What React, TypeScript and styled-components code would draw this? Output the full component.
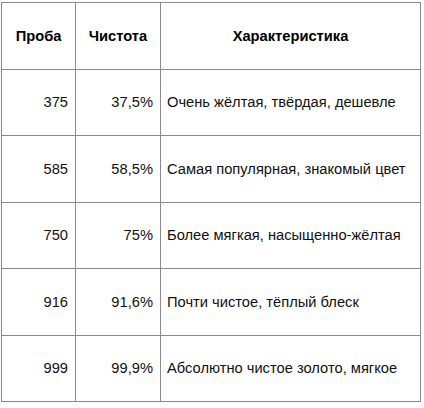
import React from "react";
import styled, { createGlobalStyle } from "styled-components";

const Global = createGlobalStyle`
  html, body { margin: 0; padding: 0; background: #ffffff; }
  body { font-family: "Liberation Sans", Arial, sans-serif; color: #111; }
`;

const Table = styled.table`
  border-collapse: collapse;
  margin: 2px 0 0 1px;
  width: 419px;
  font-size: 14.7px;
  table-layout: fixed;
`;

const Col = styled.col<{ $w: number }>`
  width: ${(p) => p.$w}px;
`;

const Row = styled.tr`
  height: 66.5px;
`;

const Head = styled.th`
  border: 1px solid #8a8a8a;
  font-weight: bold;
  text-align: center;
  padding: 0 6px;
  color: #000;
  white-space: nowrap;
`;

const Cell = styled.td<{ $align?: "left" | "right" }>`
  border: 1px solid #8a8a8a;
  padding: 0 7px 0 6px;
  text-align: ${(p) => p.$align ?? "left"};
  white-space: nowrap;
`;

const rows = [
  ["375", "37,5%", "Очень жёлтая, твёрдая, дешевле"],
  ["585", "58,5%", "Самая популярная, знакомый цвет"],
  ["750", "75%", "Более мягкая, насыщенно-жёлтая"],
  ["916", "91,6%", "Почти чистое, тёплый блеск"],
  ["999", "99,9%", "Абсолютно чистое золото, мягкое"],
];

export default function App() {
  return (
    <>
      <Global />
      <Table>
        <colgroup>
          <Col $w={74} />
          <Col $w={85} />
          <Col $w={260} />
        </colgroup>
        <thead>
          <Row>
            <Head>Проба</Head>
            <Head>Чистота</Head>
            <Head>Характеристика</Head>
          </Row>
        </thead>
        <tbody>
          {rows.map((r) => (
            <Row key={r[0]}>
              <Cell $align="right">{r[0]}</Cell>
              <Cell $align="right">{r[1]}</Cell>
              <Cell>{r[2]}</Cell>
            </Row>
          ))}
        </tbody>
      </Table>
    </>
  );
}
